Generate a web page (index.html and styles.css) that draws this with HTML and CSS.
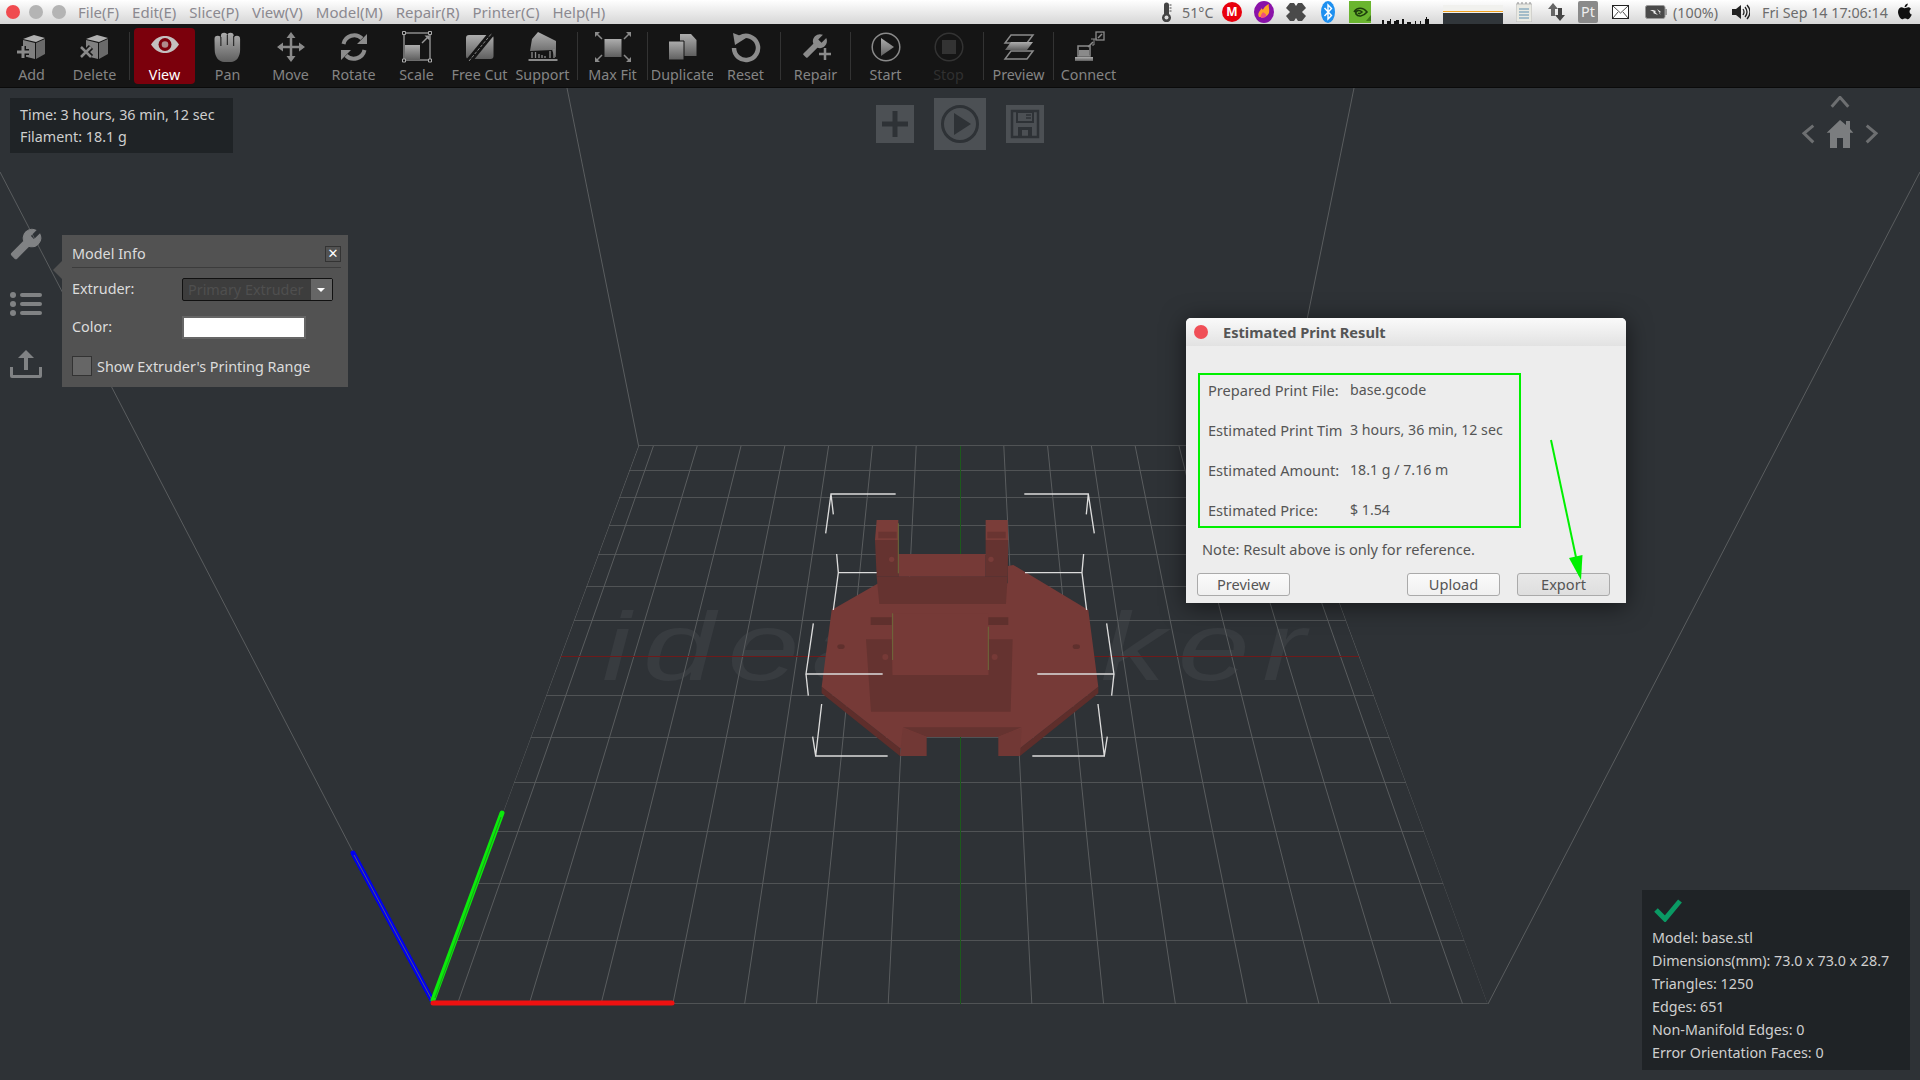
FILE: index.html
```html
<!DOCTYPE html>
<html lang="en">

<head>
    <meta charset="UTF-8">
    <title>ideaMaker</title>
    <link rel="stylesheet" href="styles.css">
</head>

<body>
    <header class="menubar">
        <div class="lights">
            <span class="light light-red"></span>
            <span class="light"></span>
            <span class="light"></span>
        </div>
        <nav class="menu">
            <span>File(F)</span>
            <span>Edit(E)</span>
            <span>Slice(P)</span>
            <span>View(V)</span>
            <span>Model(M)</span>
            <span>Repair(R)</span>
            <span>Printer(C)</span>
            <span>Help(H)</span>
        </nav>
        <div class="tray">
            <svg class="t-thermo" viewBox="0 0 11 20"><path d="M3 3a2.500 2.500 0 0 1 5 0v9a4.500 4.500 0 1 1-5 0z" fill="#444"/><circle cx="5.500" cy="15.500" r="2" fill="#ddd"/><path d="M8.500 3h2M8.500 6h2M8.500 9h2" stroke="#444"/></svg>
            <span class="t-temp">51°C</span>
            <span class="t-badge t-mega">M</span>
            <svg class="t-flame" viewBox="0 0 20 20"><ellipse cx="10" cy="10" rx="10" ry="11" fill="#8a12a8"/><path d="M5 15c-2-4 1-6 3-9 0 2 1 2 2 0 1-2 3-3 5-4-1 3 1 5 0 9-1 2-3 4-5 4-2 0-4 0-5 0z" fill="#ffa726"/><path d="M7 16c-1-3 1-4 2-6 1 1 4 2 3 4-1 2-3 2-5 2z" fill="#f2527a"/></svg>
            <svg class="t-drop" viewBox="0 0 20 20"><path d="M4 1h4l2 3 2-3h4l4 5-4 4 4 4-4 5h-4l-2-3-2 3H4l-4-5 4-4-4-4z" fill="#4a4a4a"/></svg>
            <svg class="t-blue" viewBox="0 0 14 22"><ellipse cx="7" cy="11" rx="7" ry="11" fill="#1e90f0"/><path d="M3.500 7l7 7.500L7 18V4l3.500 3.500-7 7.500" fill="none" stroke="#fff" stroke-width="1.400"/></svg>
            <svg class="t-nvidia" viewBox="0 0 22 22"><rect width="22" height="22" fill="#6ab52f"/><path d="M5 11c3-5 9-5 13 0-4 5-9 5-11 2-1-3 3-5 6-2-2 2-3 2-4 1" fill="none" stroke="#1d3d0c" stroke-width="1.600"/><path d="M17 20h5v-6z" fill="#3f7a18"/></svg>
            <svg class="t-graph" viewBox="0 0 61 24"><path d="M1 24v-4h2v4zm5 0v-3h3v-2h1v5zm7 0v-3h2v-1h3v4zm8 0v-5h2v5zm5 0v-2h4v2zm8 0v-3h1v3zm5 0v-3h1v3zm5 0v-5h1v-2h1v2h2v5z" fill="#111"/></svg>
            <span class="t-meter"></span>
            <svg class="t-note" viewBox="0 0 16 20"><rect y="2" width="16" height="18" fill="#e9e9e2" stroke="#bbb"/><path d="M3 7h10M3 10h10M3 13h10M3 16h10" stroke="#5f8fb0"/><path d="M2 2V0M6 2V0M10 2V0M14 2V0" stroke="#888"/></svg>
            <svg class="t-updown" viewBox="0 0 18 20"><path d="M6 1l5 6H8v7H4V7H1z" fill="#666"/><path d="M13 19l-5-6h3V6h4v7h3z" fill="#444"/></svg>
            <span class="t-pt">Pt</span>
            <svg class="t-mail" viewBox="0 0 17 14"><rect x=".5" y=".5" width="16" height="13" fill="#fff" stroke="#222"/><path d="M1 1l7.500 7L16 1M1 13l5-6M16 13l-5-6" fill="none" stroke="#222" stroke-width=".8"/></svg>
            <svg class="t-batt" viewBox="0 0 22 14"><rect x=".5" y=".5" width="19.500" height="13" rx="2" fill="#4a4a4a" stroke="#999"/><rect x="20" y="4" width="2" height="6" fill="#999"/><path d="M5 5l4 2-1 1 5 2-3-3 1-1-3-1zM12 4l4 3-2 1 2 2" fill="#eee"/></svg>
            <span class="t-pct">(100%)</span>
            <svg class="t-speaker" viewBox="0 0 18 18"><path d="M0 6h4l5-4v14l-5-4H0z" fill="#222"/><path d="M11 6q2 3 0 6M13 4q4 5 0 10M15 2q6 7 0 14" fill="none" stroke="#222" stroke-width="1.300"/></svg>
            <span class="t-date">Fri Sep 14 17:06:14</span>
            <svg class="t-apple" viewBox="0 0 15 18"><path d="M7 5c1.500 0 2.500-1 4-1 1.200 0 2.300.7 3 1.700-2.500 1.500-2 5 .8 6-.8 2.200-2.600 5-4.200 5-1.200 0-1.700-.8-3-.8s-1.900.8-3 .8C2.500 16.700 0 12 0 9c0-3.200 2-5 4-5 1.300 0 2.200 1 3 1z" fill="#111"/><path d="M7 4c0-2 1.500-3.600 3.500-4 .2 2-1.500 4-3.500 4z" fill="#111"/></svg>
        </div>
    </header>

    <div class="toolbar">
        <div class="tool">
            <svg viewBox="0 0 44 32"><use href="#cube"/><path d="M13 15v12M7 21h12" stroke="#151515" stroke-width="6"/><path d="M13 15v12M7 21h12" stroke="#8a8a8a" stroke-width="3"/></svg>
            <span>Add</span>
        </div>
        <div class="tool">
            <svg viewBox="0 0 44 32"><use href="#cube"/><path d="M8 16l10 10M18 16L8 26" stroke="#151515" stroke-width="6"/><path d="M8 16l10 10M18 16L8 26" stroke="#8a8a8a" stroke-width="2.500"/></svg>
            <span>Delete</span>
        </div>
        <i class="sep"></i>
        <div class="tool tool-on">
            <svg viewBox="0 0 44 32"><path d="M8 13.500C13 6 18 5 22 5s9 1 14 8.500C31 21 26 22 22 22s-9-1-14-8.500z" fill="#c4c0c0"/><circle cx="22" cy="13.500" r="6.500" fill="#7b000c"/><circle cx="22" cy="13.500" r="3.300" fill="#b08a8c"/></svg>
            <span>View</span>
        </div>
        <div class="tool">
            <svg viewBox="0 0 44 32"><path d="M8.500 8a3.200 3.200 0 0 1 6.400 0V5a3.200 3.200 0 0 1 6.400 0v0a3.200 3.200 0 0 1 6.400 0v3a3.200 3.200 0 0 1 6.400 0v11c0 7-4 12-9 12h-7c-5 0-9.400-5-9.400-12z" fill="url(#metal)"/><path d="M14.900 6v9M21.300 4v10M27.700 5v10" stroke="#151515"/></svg>
            <span>Pan</span>
        </div>
        <div class="tool">
            <svg viewBox="0 0 44 32"><path d="M22 4v24M10 16h24" stroke="#8a8a8a" stroke-width="2.500"/><path d="M22 1l4.500 6h-9zM22 31l4.500-6h-9zM8 16l6-4.500v9zM36 16l-6-4.500v9z" fill="#8a8a8a"/></svg>
            <span>Move</span>
        </div>
        <div class="tool">
            <svg viewBox="0 0 44 32"><path d="M11.500 13A11 11 0 0 1 30 7.500M32.500 19A11 11 0 0 1 14 24.500" fill="none" stroke="#8c8c8c" stroke-width="4"/><path d="M35 3v10H25zM9 29V19h10z" fill="#8c8c8c"/></svg>
            <span>Rotate</span>
        </div>
        <div class="tool">
            <svg viewBox="0 0 44 32"><rect x="9" y="2" width="26" height="27" fill="none" stroke="#8a8a8a" stroke-width="1.500"/><rect x="10" y="14" width="15" height="15" fill="url(#metal)"/><path d="M27 12l6-6" stroke="#999" stroke-width="1.500"/><path d="M34.500 4.500v5l-5-5z" fill="#999"/><path d="M7.500.5h3v3h-3zM33.500.500h3v3h-3zM7.500 28h3v3h-3zM33.500 28h3v3h-3z" fill="#151515" stroke="#aaa"/></svg>
            <span>Scale</span>
        </div>
        <div class="tool">
            <svg viewBox="0 0 44 32"><rect x="8" y="4" width="27.500" height="24" rx="3" fill="url(#metal)"/><path d="M11 30L34 2" stroke="#151515" stroke-width="6"/><path d="M11 30L34 2" stroke="#888" stroke-width="1" stroke-dasharray="3 1.500"/></svg>
            <span>Free Cut</span>
        </div>
        <div class="tool">
            <svg viewBox="0 0 44 32"><path d="M17 1l18 9v16h-1l-3-7-22 1 2-12z" fill="url(#metal)"/><path d="M11 21v6M14.500 21v6M18 23v4M21 24v3M24 25v2M29 20v7M33 18v9" stroke="#8a8a8a" stroke-width="1.300"/><path d="M7.500 29h29" stroke="#8a8a8a" stroke-width="2"/></svg>
            <span>Support</span>
        </div>
        <i class="sep"></i>
        <div class="tool">
            <svg viewBox="0 0 44 32"><rect x="13.500" y="8" width="17" height="18" fill="url(#metal)"/><path d="M6 3l5 5M38 3l-5 5M6 29l5-5M38 29l-5-5" stroke="#8a8a8a" stroke-width="1.500"/><path d="M4 1h5l-5 5zM40 1h-5l5 5zM4 31h5l-5-5zM40 31h-5l5-5z" fill="#8a8a8a"/></svg>
            <span>Max Fit</span>
        </div>
        <i class="sep"></i>
        <div class="tool">
            <svg viewBox="0 0 44 32"><path d="M19 3h11l5.500 6v16H19z" fill="url(#metal)"/><path d="M7.500 10H23v19H7.500z" fill="url(#metal)" stroke="#151515"/></svg>
            <span>Duplicate</span>
        </div>
        <div class="tool">
            <svg viewBox="0 0 44 32"><path d="M16 6.500A12 12 0 1 1 10 17" fill="none" stroke="#8c8c8c" stroke-width="4.500"/><path d="M9 2l2 12 11-7z" fill="#8c8c8c"/></svg>
            <span>Reset</span>
        </div>
        <i class="sep"></i>
        <div class="tool">
            <svg viewBox="0 0 44 32"><g transform="translate(34 2) scale(-1.080 1.080)"><path d="M22.700 19l-9.100-9.100c.9-2.300.4-5-1.500-6.900-2-2-5-2.400-7.400-1.300L9 6 6 9 1.600 4.700C.4 7.100.9 10.100 2.900 12.100c1.900 1.900 4.600 2.400 6.900 1.500l9.100 9.100c.4.400 1 .4 1.400 0l2.300-2.300c.5-.4.500-1.100.1-1.400z" fill="#8a8a8a"/></g><path d="M31 17v12M25 23h12" stroke="#151515" stroke-width="6"/><path d="M31 17v12M25 23h12" stroke="#8a8a8a" stroke-width="2.500"/></svg>
            <span>Repair</span>
        </div>
        <i class="sep"></i>
        <div class="tool">
            <svg viewBox="0 0 44 32"><circle cx="22" cy="16" r="13.800" fill="none" stroke="#8a8a8a" stroke-width="1.500"/><path d="M17 7l13 9-13 9z" fill="url(#metal)"/></svg>
            <span>Start</span>
        </div>
        <div class="tool tool-off">
            <svg viewBox="0 0 44 32"><circle cx="22" cy="16" r="13.800" fill="none" stroke="#333" stroke-width="1.500"/><rect x="15" y="9" width="14" height="14" fill="#333"/></svg>
            <span>Stop</span>
        </div>
        <i class="sep"></i>
        <div class="tool">
            <svg viewBox="0 0 44 32"><path d="M14 4h22l-6 8H8zM14 20h22l-6 8H8z" fill="none" stroke="#8a8a8a" stroke-width="1.500"/><path d="M14 11h22l-6 8H8z" fill="url(#metal)"/></svg>
            <span>Preview</span>
        </div>
        <i class="sep"></i>
        <div class="tool">
            <svg viewBox="0 0 44 32"><rect x="29" y="1" width="8" height="8" fill="none" stroke="#8a8a8a" stroke-width="1.300"/><path d="M31 7l4-4M21 16l5-5" stroke="#8a8a8a" stroke-width="1.500"/><path d="M27 8v6h-2M24 8h6" stroke="#8a8a8a" fill="none"/><rect x="11" y="15" width="12" height="10" fill="none" stroke="#8a8a8a" stroke-width="1.500"/><path d="M12 19h10v6H12z" fill="#8a8a8a"/><path d="M8 26h18v4H8z" fill="url(#metal)"/></svg>
            <span>Connect</span>
        </div>
    </div>

    <main class="viewport">
        <svg class="scene" viewBox="0 88 1920 992">
            <defs>
                <linearGradient id="metal" x1="0" y1="0" x2="0" y2="1">
                    <stop offset="0" stop-color="#adadad"/>
                    <stop offset="1" stop-color="#5f5f5f"/>
                </linearGradient>
                <clipPath id="floor">
                    <polygon points="638.600,445 1281.400,445 1488,1005 432,1005"/>
                </clipPath>
                <symbol id="cube" viewBox="0 0 44 32">
                    <path d="M13 8l11-4 11 3-9 4z" fill="#b0b0b0"/>
                    <path d="M13 9l12 3v16l-12-3z" fill="#808080"/>
                    <path d="M26 12l9-4v15l-9 5z" fill="#6a6a6a"/>
                </symbol>
            </defs>

            <text class="watermark" transform="translate(602 680) scale(1.35 1)" textLength="521">ideamaker</text>

            <g class="walls">
                <path d="M638.600 446L567 88M1281.400 446L1354 88M0 172L432 1004M1920 172L1488 1004"/>
            </g>
            <g clip-path="url(#floor)">
                <path class="grid-h" d="M400 445.500H1520M400 470.500H1520M400 497.500H1520M400 525.500H1520M400 554.500H1520M400 586.500H1520M400 620.500H1520M400 695.500H1520M400 737.500H1520M400 782.500H1520M400 831.500H1520M400 883.500H1520M400 940.500H1520M400 1003.500H1520"/>
                <path class="grid-v" d="M638.600 446L432 1004M1281.400 446L1488 1004M1266.600 446L1462.600 1004M1222.800 446L1390.800 1004M1179 446L1319 1004M1135.200 446L1247.200 1004M1091.400 446L1175.400 1004M1047.600 446L1103.600 1004M1003.800 446L1031.800 1004M916.200 446L888.200 1004M872.400 446L816.400 1004M828.600 446L744.600 1004M784.800 446L672.800 1004M741 446L601 1004M697.200 446L529.200 1004M653.400 446L457.400 1004"/>
            </g>
            <path class="line-red" d="M561 656.500H1359"/>
            <path class="line-green" d="M960.500 446V1004"/>

            <g transform="translate(780 480) scale(.3333)">
                <path d="M125 620L360 805 360 828 125 640z M955 620L720 805 720 828 955 640z" fill="#5e2e2b"/>
                <path d="M155 390L295 310 683 310 683 258 700 255 925 390 955 620 720 805 655 770 440 770 360 805 125 620z" fill="#763a37"/>
                <path d="M258 478H335L338 585H625L625 478H698L692 695H273z" fill="#653330"/>
                <path d="M338 400H625V585H338z" fill="#763a37"/>
                <path d="M272 412H335V435H272zM625 412H685V435H625z" fill="#5f302d"/>
                <path d="M355 222H617V290H355z" fill="#763a37"/>
                <path d="M290 290H683L678 372H298z" fill="#653330"/>
                <path d="M285 180H355V290H290zM617 180H685L683 290H617z" fill="#653330"/>
                <path d="M290 120H355V180H285zM617 120H683L685 180H617z" fill="#7a3d39"/>
                <path d="M295 155H350V175H295zM622 155H677V175H622z" fill="#693431"/>
                <path d="M355 130V280M338 400V540M625 440V570" stroke="#6d6a3a" stroke-width="3" fill="none"/>
                <circle cx="335" cy="238" r="8" fill="#793c39"/>
                <circle cx="633" cy="238" r="8" fill="#793c39"/>
                <circle cx="316" cy="531" r="9" fill="#763a37"/>
                <circle cx="644" cy="531" r="9" fill="#763a37"/>
                <ellipse cx="183" cy="500" rx="11" ry="7" fill="#5f302d"/>
                <ellipse cx="889" cy="500" rx="11" ry="7" fill="#5f302d"/>
                <path d="M368 742H725L655 770H440z" fill="#653330"/>
                <path d="M368 745L440 770V828H360zM725 745L655 770V828H720z" fill="#713835"/>
                <g class="brackets">
                    <path d="M347 42H153L137 160M153 42L160 103"/>
                    <path d="M733 42H925L943 160M925 42L919 103"/>
                    <path d="M290 278H175L160 390M175 278L170 222"/>
                    <path d="M735 278H906L920 390M906 278L911 222"/>
                    <path d="M308 582H78L100 430M78 582L85 647"/>
                    <path d="M772 582H1002L980 430M1002 582L995 647"/>
                    <path d="M323 828H107L125 672M107 828L98 770"/>
                    <path d="M757 828H973L954 672M973 828L982 770"/>
                </g>
            </g>

            <g class="axes">
                <path d="M353 853L433 1002" stroke="#0000f0"/>
                <path class="axis-core" d="M354 855L432 1000" stroke="#55557a"/>
                <path d="M502 813L433 1000" stroke="#0bea0b"/>
                <path class="axis-core" d="M501 817L435 998" stroke="#1c9a1c"/>
                <path d="M433 1003H672" stroke="#ee1111"/>
            </g>
        </svg>

        <div class="time-box">
            <div>Time: 3 hours, 36 min, 12 sec</div>
            <div>Filament: 18.1 g</div>
        </div>

        <div class="quick">
            <span class="quick-btn">
                <svg viewBox="0 0 38 38"><path d="M19 6v26M6 19h26" stroke="#2e3236" stroke-width="5"/></svg>
            </span>
            <span class="quick-btn quick-main">
                <svg viewBox="0 0 52 52"><circle cx="26" cy="26" r="17.500" fill="none" stroke="#2e3236" stroke-width="3"/><path d="M20 15l17 11-17 11z" fill="#2e3236"/></svg>
            </span>
            <span class="quick-btn">
                <svg viewBox="0 0 38 38"><path d="M6 6h26v26H6z" fill="none" stroke="#2e3236" stroke-width="2.500"/><path d="M11 7h16v10H11z" fill="none" stroke="#2e3236" stroke-width="2"/><path d="M20 10h5M20 13h5" stroke="#2e3236" stroke-width="1.500"/><path d="M12 31V22h14v9h-4v-6h-6v6z" fill="#2e3236"/></svg>
            </span>
        </div>

        <svg class="home" viewBox="0 0 76 52">
            <path d="M29.700 10.700L38 1.300 46.300 10.700M11.300 29.700L2 37.300 11.300 46.300M64.700 29.700L74 37.300 64.700 46.300" fill="none" stroke="#6d6f71" stroke-width="3"/>
            <path d="M38 24l6 5v-4h4v8l3.300 3.700h-3.300V52H41V42h-6v10h-7V36.700h-3.300z" fill="#7b7d7f"/>
        </svg>

        <div class="side-icons">
            <svg class="side-wrench" viewBox="0 0 24 24"><g transform="translate(24 0) scale(-1 1)"><path d="M22.700 19l-9.100-9.100c.9-2.300.4-5-1.500-6.900-2-2-5-2.400-7.400-1.300L9 6 6 9 1.600 4.700C.4 7.100.9 10.100 2.900 12.100c1.900 1.900 4.600 2.400 6.900 1.500l9.100 9.100c.4.400 1 .4 1.400 0l2.300-2.300c.5-.4.500-1.100.1-1.400z" stroke="#808284" stroke-width=".8"/></g></svg>
            <svg class="side-list" viewBox="0 0 32 24"><circle cx="3" cy="3" r="3"/><circle cx="3" cy="12" r="3"/><circle cx="3" cy="21" r="3"/><rect x="10" y="1" width="22" height="4" rx="2"/><rect x="10" y="10" width="22" height="4" rx="2"/><rect x="10" y="19" width="22" height="4" rx="2"/></svg>
            <svg class="side-upload" viewBox="0 0 32 28"><path d="M16 0l8 8h-6v12h-4V8H8z"/><path d="M0 17h3v8h26v-8h3v9a2 2 0 0 1-2 2H2a2 2 0 0 1-2-2z"/></svg>
        </div>

        <section class="model-info">
            <div class="info-head">
                <span>Model Info</span>
                <span class="info-close">✕</span>
            </div>
            <div class="info-row">
                <label class="info-label">Extruder:</label>
                <div class="fake-select">
                    <span class="fake-value">Primary Extruder</span>
                    <span class="fake-arrow"></span>
                </div>
            </div>
            <div class="info-row info-color">
                <label class="info-label">Color:</label>
                <span class="swatch"></span>
            </div>
            <div class="info-check">
                <span class="checkbox"></span>
                <span>Show Extruder's Printing Range</span>
            </div>
        </section>

        <section class="result">
            <div class="result-title">
                <span class="result-dot"></span>
                <span>Estimated Print Result</span>
            </div>
            <div class="result-box">
                <div class="result-row"><span class="result-label">Prepared Print File:</span><span class="result-value">base.gcode</span></div>
                <div class="result-row"><span class="result-label">Estimated Print Tim</span><span class="result-value">3 hours, 36 min, 12 sec</span></div>
                <div class="result-row"><span class="result-label">Estimated Amount:</span><span class="result-value">18.1 g / 7.16 m</span></div>
                <div class="result-row"><span class="result-label">Estimated Price:</span><span class="result-value">$ 1.54</span></div>
            </div>
            <p class="result-note">Note: Result above is only for reference.</p>
            <div class="result-btns">
                <button class="btn btn-left">Preview</button>
                <button class="btn">Upload</button>
                <button class="btn btn-hover">Export</button>
            </div>
            <svg class="result-arrow" viewBox="0 0 60 150"><path d="M2 2L31 138" stroke="#00f000" stroke-width="2"/><path d="M20 120L33.500 117 32 142z" fill="#00f000"/></svg>
        </section>

        <div class="stats">
            <svg class="stats-ok" viewBox="0 0 28 24"><path d="M2 12l9 9L26 3" fill="none" stroke="#0a9a64" stroke-width="5"/></svg>
            <div>Model: base.stl</div>
            <div>Dimensions(mm): 73.0 x 73.0 x 28.7</div>
            <div>Triangles: 1250</div>
            <div>Edges: 651</div>
            <div>Non-Manifold Edges: 0</div>
            <div>Error Orientation Faces: 0</div>
        </div>
    </main>
</body>

</html>
```

FILE: styles.css
```css
* {
    box-sizing: border-box;
}

html, body {
    height: 100%;
}

body {
    margin: 0;
    display: flex;
    flex-direction: column;
    overflow: hidden;
    background: #2e3236;
    font-family: "Noto Sans", "Open Sans", sans-serif;
    font-size: 14.3px;
}

/* top bar */
.menubar {
    height: 24px;
    display: flex;
    align-items: center;
    background: linear-gradient(#ffffff, #d6d6d6);
    color: #8b8990;
}

.lights {
    display: flex;
    gap: 9px;
    padding-left: 6px;
    width: 78px;
}

.light {
    width: 14px;
    height: 14px;
    border-radius: 50%;
    background: #b4b4b4;
}

.light-red {
    background: #f04b50;
}

.menu {
    display: flex;
    gap: 13px;
    white-space: nowrap;
    font-size: 15px;
}

.tray {
    margin-left: auto;
    padding-right: 8px;
    display: flex;
    align-items: center;
    height: 24px;
    color: #6c6c6c;
    white-space: nowrap;
}

.tray > * {
    flex: none;
}

.t-thermo { width: 11px; height: 20px; }
.t-temp { margin-left: 10px; width: 30px; }
.t-badge {
    margin-left: 10px;
    width: 20px;
    height: 20px;
    border-radius: 50%;
    background: #e8000d;
    color: #fff;
    font-weight: bold;
    font-size: 12px;
    line-height: 20px;
    text-align: center;
}
.t-flame { margin-left: 12px; width: 20px; height: 22px; }
.t-drop { margin-left: 12px; width: 20px; height: 20px; }
.t-blue { margin-left: 15px; width: 14px; height: 22px; }
.t-nvidia { margin-left: 14px; width: 22px; height: 22px; }
.t-graph { margin-left: 10px; width: 61px; height: 24px; }
.t-meter {
    margin-left: 1px;
    width: 60px;
    height: 19px;
    margin-top: 5px;
    background: linear-gradient(#f1f1ee 0, #f1f1ee 33%, #f2a21f 33%, #f2a21f 39%, #f1f1ee 39%, #f1f1ee 44%, #31363a 44%);
}
.t-note { margin-left: 13px; width: 16px; height: 20px; }
.t-updown { margin-left: 15px; width: 18px; height: 20px; }
.t-pt {
    margin-left: 13px;
    width: 20px;
    height: 22px;
    background: #8a8a8a;
    color: #eee;
    border-radius: 2px;
    text-align: center;
    line-height: 22px;
}
.t-mail { margin-left: 14px; width: 17px; height: 14px; }
.t-batt { margin-left: 16px; width: 22px; height: 14px; }
.t-pct { margin-left: 6px; width: 47px; }
.t-speaker { margin-left: 12px; width: 18px; height: 18px; }
.t-date { margin-left: 12px; width: 125px; }
.t-apple { margin-left: 11px; width: 14px; height: 18px; }

/* toolbar */
.toolbar {
    height: 64px;
    display: flex;
    background: #151515;
    border-bottom: 1px solid #0a0a0a;
}

.tool {
    width: 63px;
    height: 58px;
    margin-top: 3px;
    display: flex;
    flex-direction: column;
    align-items: center;
    color: #848484;
    border: 1px solid transparent;
    overflow: hidden;
}

.tool svg {
    flex: none;
    width: 44px;
    height: 32px;
    margin-top: 3px;
}

.tool span {
    height: 22px;
    line-height: 24px;
    white-space: nowrap;
}

.tool-on {
    background: #7b000c;
    background-clip: padding-box;
    border-radius: 5px;
    color: #fff;
}

.tool-off {
    color: #303030;
}

.sep {
    width: 7px;
    height: 48px;
    margin-top: 8px;
    background: linear-gradient(#333, #333) center / 1px 100% no-repeat;
}

/* 3d view */
.viewport {
    flex: 1;
    position: relative;
}

.scene {
    position: absolute;
    left: 0;
    top: 0;
    width: 100%;
    height: 100%;
}

.watermark {
    font-family: "Liberation Sans", sans-serif;
    font-style: italic;
    font-size: 96px;
    fill: #383c40;
}

.walls path, .grid-v {
    fill: none;
    stroke: #5a5d5f;
    stroke-width: 1;
}

.grid-h {
    fill: none;
    stroke: #505355;
    stroke-width: 1;
}

.line-red {
    stroke: #6e1a1a;
    stroke-width: 1;
}

.line-green {
    stroke: #1c5a1c;
    stroke-width: 1;
}

.brackets path {
    fill: none;
    stroke: #dcdcdc;
    stroke-width: 4;
}

.axes path {
    fill: none;
    stroke-width: 5;
    stroke-linecap: round;
}

.axes .axis-core {
    stroke-width: 1;
    stroke-linecap: butt;
}

.time-box {
    position: absolute;
    left: 10px;
    top: 10px;
    width: 223px;
    height: 55px;
    padding: 6px 10px;
    background: #1f2326;
    color: #cfcfcf;
    line-height: 22px;
}

.quick {
    position: absolute;
    left: 876px;
    top: 10px;
    display: flex;
    align-items: center;
    gap: 20px;
}

.quick-btn {
    display: block;
    width: 38px;
    height: 38px;
    background: #4c5054;
}

.quick-main {
    width: 52px;
    height: 52px;
}

.quick-btn svg {
    display: block;
    width: 100%;
    height: 100%;
}

.home {
    position: absolute;
    left: 1802px;
    top: 8px;
    width: 76px;
    height: 52px;
}

.side-icons {
    position: absolute;
    left: 10px;
    top: 140px;
    display: flex;
    flex-direction: column;
    fill: #808284;
}

.side-wrench { width: 32px; height: 32px; }
.side-list { width: 32px; height: 24px; margin-top: 32px; }
.side-upload { width: 32px; height: 28px; margin-top: 34px; }

/* model info popup */
.model-info {
    position: absolute;
    left: 62px;
    top: 147px;
    width: 286px;
    height: 152px;
    background: #525252;
    color: #dcdcdc;
    font-size: 14.4px;
}

.model-info::before {
    content: "";
    position: absolute;
    left: -9px;
    top: 26px;
    border: 9px solid transparent;
    border-left: 0;
    border-right-color: #525252;
}

.info-head {
    height: 33px;
    margin: 0 7px 0 10px;
    padding-top: 5px;
    display: flex;
    justify-content: space-between;
    align-items: center;
    border-bottom: 1px solid #3c3c3c;
}

.info-close {
    width: 16px;
    height: 16px;
    border: 1px solid #333;
    color: #fff;
    font-size: 13px;
    line-height: 14px;
    text-align: center;
    font-family: "DejaVu Sans", sans-serif;
}

.info-row {
    display: flex;
    align-items: center;
    height: 23px;
    margin: 10px 0 0 10px;
}

.info-label {
    width: 110px;
    padding-bottom: 2px;
}

.fake-select {
    width: 151px;
    height: 23px;
    display: flex;
    background: #3d3d3d;
    border: 1px solid #111;
    border-radius: 2px;
    color: #4f4f4f;
}

.fake-value {
    flex: 1;
    padding-left: 5px;
    line-height: 21px;
    white-space: nowrap;
    overflow: hidden;
}

.fake-arrow {
    width: 21px;
    background: #666;
    position: relative;
}

.fake-arrow::after {
    content: "";
    position: absolute;
    left: 6px;
    top: 9px;
    border: 4px solid transparent;
    border-bottom: 0;
    border-top-color: #fff;
}

.info-color {
    margin-top: 15px;
}

.swatch {
    width: 124px;
    height: 23px;
    background: #fff;
    border: 2px solid #666;
}

.info-check {
    display: flex;
    align-items: center;
    gap: 5px;
    margin: 17px 0 0 10px;
}

.checkbox {
    width: 20px;
    height: 20px;
    background: #666;
    border: 1px solid #333;
}

/* result dialog */
.result {
    position: absolute;
    left: 1186px;
    top: 230px;
    width: 440px;
    height: 285px;
    background: #ededed;
    color: #555;
    border-radius: 5px 5px 0 0;
    box-shadow: 0 3px 24px rgba(0, 0, 0, .55);
    font-size: 14.6px;
}

.result-title {
    height: 28px;
    display: flex;
    align-items: center;
    gap: 15px;
    padding-left: 8px;
    background: linear-gradient(#fafafa, #e2e2e2);
    border-radius: 5px 5px 0 0;
    font-weight: bold;
}

.result-dot {
    width: 14px;
    height: 14px;
    border-radius: 50%;
    background: #f04f57;
}

.result-box {
    width: 323px;
    height: 155px;
    margin: 27px 0 0 12px;
    padding-left: 8px;
    border: 2px solid #00f000;
    display: grid;
    grid-auto-rows: 31px;
    row-gap: 9px;
}

.result-row {
    display: flex;
    align-items: center;
    gap: 8px;
    padding-bottom: 2px;
    white-space: nowrap;
}

.result-label {
    width: 134px;
    flex: none;
}

.result-value {
    font-size: 14.2px;
}

.result-note {
    margin: 11px 0 0 16px;
    line-height: 20px;
}

.result-btns {
    display: flex;
    gap: 17px;
    margin: 14px 16px 0 11px;
}

.btn {
    width: 93px;
    height: 23px;
    padding: 0 0 2px;
    border: 1px solid #aaa;
    border-radius: 3px;
    background: linear-gradient(#fbfbfb, #f0f0f0);
    color: #555;
    font: inherit;
}

.btn-left {
    margin-right: auto;
}

.btn-hover {
    background: linear-gradient(#e8e8e8, #dedede);
}

.result-arrow {
    position: absolute;
    left: 363px;
    top: 120px;
    width: 60px;
    height: 150px;
}

/* model stats */
.stats {
    position: absolute;
    right: 10px;
    bottom: 10px;
    width: 268px;
    height: 180px;
    padding: 8px 10px;
    background: #1f2326;
    color: #cfcfcf;
    line-height: 23px;
    white-space: nowrap;
}

.stats-ok {
    display: block;
    width: 28px;
    height: 24px;
    margin: 0 0 4px 2px;
}
```
